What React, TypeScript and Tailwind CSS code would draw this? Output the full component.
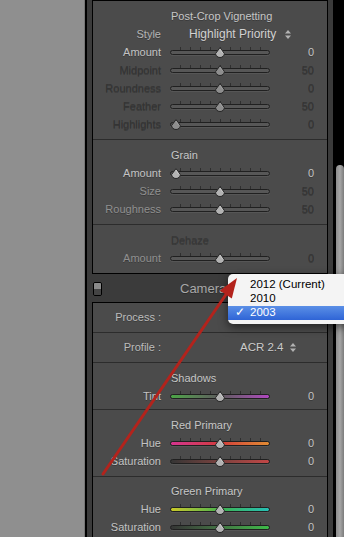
import React from "react";

type Tone = "bright" | "mid" | "off";

const toneClass: Record<Tone, string> = {
  bright: "text-[#c3c3c3]",
  mid: "text-[#909090]",
  off: "text-[#343434]",
};

const TICKS = [10, 20, 30, 40, 50, 60, 70, 80, 90];

const Thumb = ({ off }: { off?: boolean }) => (
  <svg width="10" height="11" viewBox="0 0 10 11">
    <path
      d="M5 0.6 L9.4 6.6 A4.4 3.9 0 0 1 5 10.5 A4.4 3.9 0 0 1 0.6 6.6 Z"
      fill={off ? "#8e8e8e" : "#b3b3b3"}
      stroke="#262626"
      strokeWidth="1"
    />
    <path d="M5 2 L7.6 6" stroke={off ? "#a4a4a4" : "#d2d2d2"} strokeWidth="0.8" />
  </svg>
);

const Slider = ({ pos, off, track }: { pos: number; off?: boolean; track?: string }) => (
  <div className="relative h-[18px] w-[100px]">
    {TICKS.map((x) => (
      <div
        key={x}
        className="absolute top-[4px] h-[3px] w-px bg-[#2f2f2f]"
        style={{ left: x }}
      />
    ))}
    <div
      className={`absolute left-0 right-0 top-[7px] h-[5px] rounded-full border border-[#202020] shadow-[0_1px_0_#565656] ${
        track ?? "bg-[#575757]"
      }`}
    />
    <div className="absolute top-[4px]" style={{ left: 1 + pos * 88 }}>
      <Thumb off={off} />
    </div>
  </div>
);

interface RowProps {
  label: string;
  tone: Tone;
  pos: number;
  value: string;
  valueTone: Tone;
  off?: boolean;
  track?: string;
}

const Row = ({ label, tone, pos, value, valueTone, off, track }: RowProps) => (
  <div className="flex h-[18px] items-center">
    <div className={`w-[68px] text-right text-[11px] ${toneClass[tone]}`}>{label}</div>
    <div className="ml-[9px]">
      <Slider pos={pos} off={off} track={track} />
    </div>
    <div className={`w-[44px] text-right text-[11px] ${toneClass[valueTone]}`}>{value}</div>
  </div>
);

const Title = ({ text, dim }: { text: string; dim?: boolean }) => (
  <div
    className={`flex h-[18px] items-center pl-[78px] text-[11px] ${
      dim ? "text-[#373737]" : "text-[#c6c6c6]"
    }`}
  >
    {text}
  </div>
);

const UpDown = () => (
  <svg width="6" height="9" viewBox="0 0 6 9">
    <path d="M0 3.6 L3 0 L6 3.6 Z M0 5.4 L3 9 L6 5.4 Z" fill="#b2b2b2" />
  </svg>
);

export default function App() {
  return (
    <div className="relative flex h-[537px] w-[344px] overflow-hidden bg-[#8f8f8f] font-['Liberation_Sans',Arial,sans-serif] [text-shadow:0_1px_0_rgba(0,0,0,0.25)]">
      <div className="w-[84px] shrink-0" />
      <div className="w-px shrink-0 bg-[#777777]" />
      <div className="w-[2px] shrink-0 bg-black" />

      {/* right panel column */}
      <div className="flex w-[246px] shrink-0 flex-col overflow-hidden bg-[#3b3b3b]">
        <div className="mx-[5px] shrink-0 border border-black bg-[#4b4b4b]">
          {/* Post-Crop Vignetting */}
          <div className="border-b border-[#2c2c2c] py-[6px]">
            <Title text="Post-Crop Vignetting" />
            <div className="flex h-[18px] items-center">
              <div className="w-[68px] text-right text-[11px] text-[#b4b4b4]">Style</div>
              <div className="ml-[28px] text-[12px] text-[#d2d2d2]">Highlight Priority</div>
              <div className="ml-[9px]">
                <UpDown />
              </div>
            </div>
            <Row label="Amount" tone="bright" pos={0.5} value="0" valueTone="bright" />
            <Row label="Midpoint" tone="off" pos={0.5} value="50" valueTone="off" off />
            <Row label="Roundness" tone="off" pos={0.5} value="0" valueTone="off" off />
            <Row label="Feather" tone="off" pos={0.5} value="50" valueTone="off" off />
            <Row label="Highlights" tone="off" pos={0} value="0" valueTone="off" off />
          </div>

          {/* Grain */}
          <div className="border-b border-[#2c2c2c] py-[6px]">
            <Title text="Grain" />
            <Row label="Amount" tone="bright" pos={0} value="0" valueTone="bright" />
            <Row label="Size" tone="mid" pos={0.5} value="50" valueTone="off" />
            <Row label="Roughness" tone="mid" pos={0.5} value="50" valueTone="off" />
          </div>

          {/* Dehaze */}
          <div className="py-[6px]">
            <Title text="Dehaze" dim />
            <Row label="Amount" tone="mid" pos={0.5} value="0" valueTone="off" />
          </div>
        </div>

        {/* Camera Calibration header (rest of title hidden under the popup) */}
        <div className="flex h-[28px] shrink-0 items-center pl-[6px] pt-[1px]">
          <div className="flex h-[14px] w-[9px] flex-col overflow-hidden rounded-[2px] border border-black">
            <div className="flex-1 bg-[#8a8a8a]" />
            <div className="flex-1 bg-[#444444]" />
          </div>
          <div className="ml-[78px] text-[13px] text-[#a8a8a8]">Camera</div>
        </div>

        <div className="mx-[5px] shrink-0 border-x border-t border-black bg-[#4b4b4b]">
          <div className="flex h-[30px] items-center border-b border-[#2c2c2c]">
            <div className="w-[68px] text-right text-[11px] text-[#bcbcbc]">Process :</div>
          </div>
          <div className="flex h-[30px] items-center border-b border-[#2c2c2c]">
            <div className="w-[68px] text-right text-[11px] text-[#bcbcbc]">Profile :</div>
            <div className="ml-[79px] text-[11.5px] text-[#cbcbcb]">ACR 2.4</div>
            <div className="ml-[7px]">
              <UpDown />
            </div>
          </div>

          <div className="border-b border-[#2c2c2c] pb-[4px] pt-[6px]">
            <Title text="Shadows" />
            <Row
              label="Tint"
              tone="bright"
              pos={0.5}
              value="0"
              valueTone="bright"
              track="bg-linear-to-r from-[#4aa545] via-[#5c5a5c] to-[#b046c0]"
            />
          </div>

          <div className="border-b border-[#2c2c2c] py-[6px]">
            <Title text="Red Primary" />
            <Row
              label="Hue"
              tone="bright"
              pos={0.5}
              value="0"
              valueTone="bright"
              track="bg-linear-to-r from-[#d5348e] via-[#d23a3a] to-[#e08a32]"
            />
            <Row
              label="Saturation"
              tone="bright"
              pos={0.5}
              value="0"
              valueTone="bright"
              track="bg-linear-to-r from-[#353535] to-[#c24646]"
            />
          </div>

          <div className="py-[5px]">
            <Title text="Green Primary" />
            <Row
              label="Hue"
              tone="bright"
              pos={0.5}
              value="0"
              valueTone="bright"
              track="bg-linear-to-r from-[#c8c826] via-[#3fb24a] to-[#26bfb4]"
            />
            <Row
              label="Saturation"
              tone="bright"
              pos={0.5}
              value="0"
              valueTone="bright"
              track="bg-linear-to-r from-[#353535] to-[#3cba48]"
            />
          </div>
        </div>
      </div>

      {/* scrollbar */}
      <div className="flex w-[11px] shrink-0 flex-col bg-black pl-[3px] pt-[165px]">
        <div className="flex-1 rounded-t-[4px] bg-linear-to-r from-[#8c8c8c] via-[#a6a6a6] to-[#7c7c7c]" />
      </div>

      {/* process popup menu */}
      <div className="absolute left-[228px] top-[274px] w-[140px] rounded-[5px] bg-[#f4f4f4] py-[4px] text-[11.5px] text-black shadow-[0_3px_10px_rgba(0,0,0,0.55)] [text-shadow:none]">
        <div className="flex h-[14px] items-center pl-[22px]">2012 (Current)</div>
        <div className="flex h-[14px] items-center pl-[22px]">2010</div>
        <div className="flex h-[14px] items-center bg-linear-to-b from-[#5b8fe6] to-[#2f64d6] text-white">
          <span className="w-[22px] pl-[7px]">✓</span>
          <span>2003</span>
        </div>
      </div>

      {/* annotation arrow */}
      <svg
        className="pointer-events-none absolute left-0 top-0"
        width="344"
        height="537"
        viewBox="0 0 344 537"
      >
        <line x1="103" y1="474" x2="227" y2="293" stroke="#b3231c" strokeWidth="3" strokeLinecap="round" />
        <polygon points="237,278 231.8,298.6 219.8,290.4" fill="#b3231c" />
      </svg>
    </div>
  );
}
